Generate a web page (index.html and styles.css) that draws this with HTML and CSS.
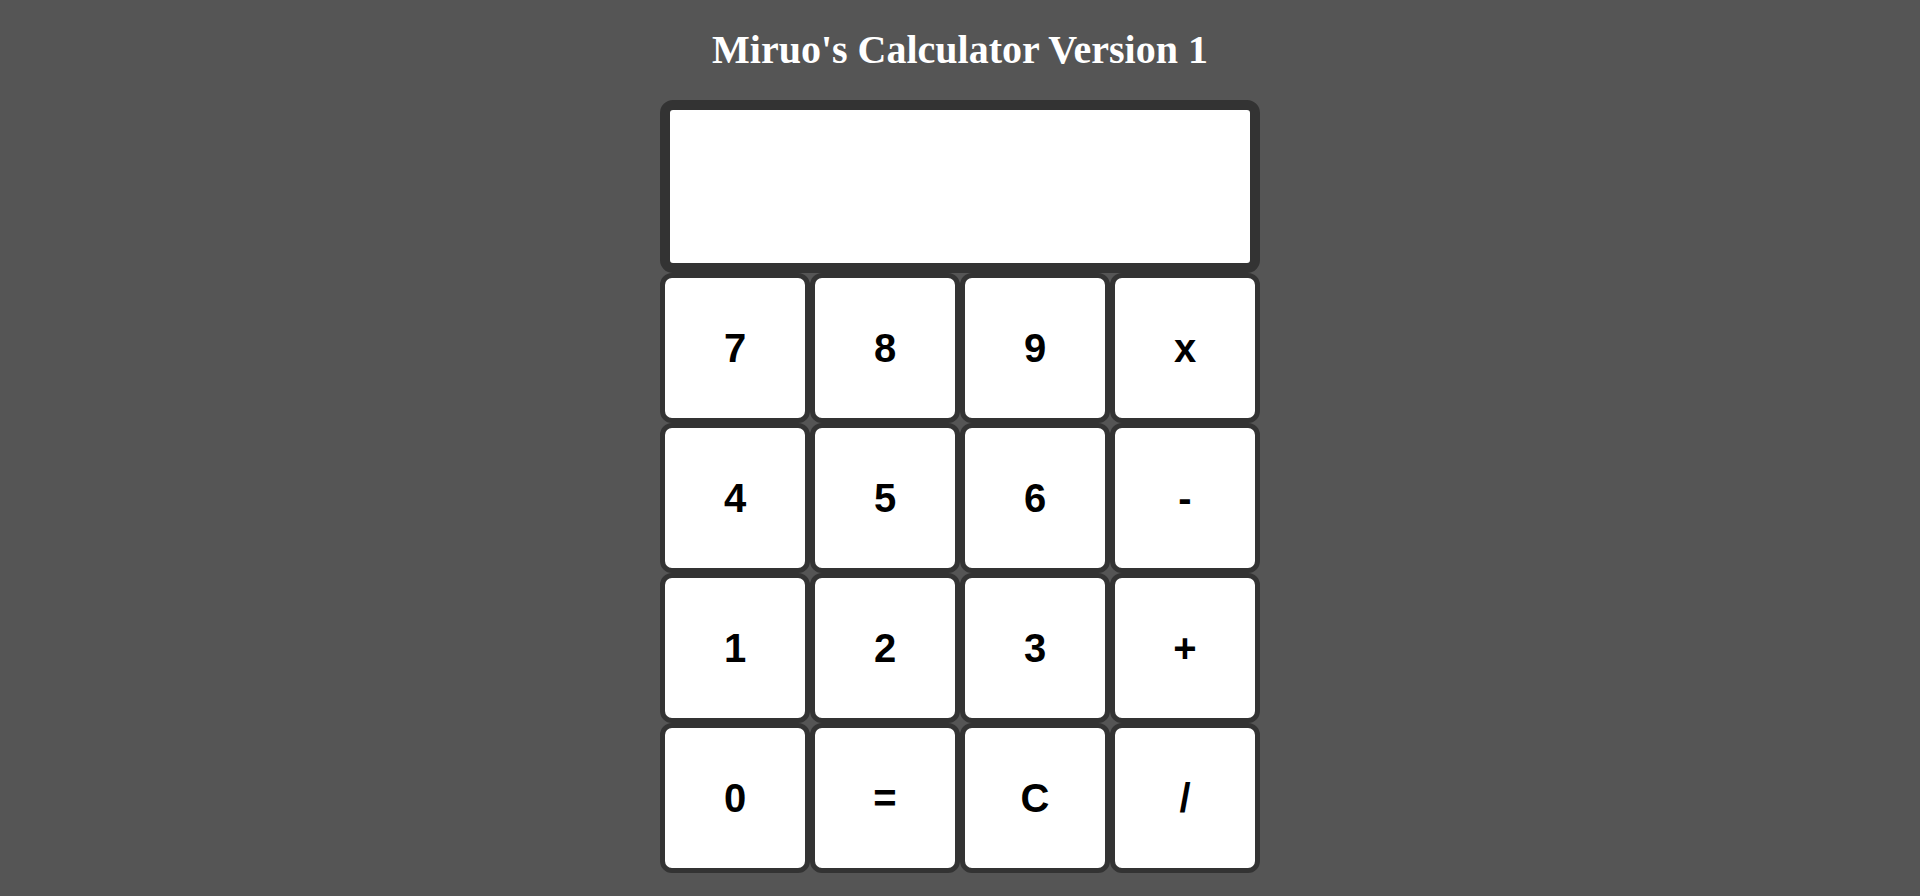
FILE: index.html
```html
<!DOCTYPE html>
<html lang="en">
<head>
<meta charset="utf-8">
<title>Miruo's Calculator Version 1</title>
<link rel="stylesheet" href="styles.css">
</head>
<body>
<h1 class="title">Miruo's Calculator Version 1</h1>
<div class="calculator">
  <div class="display"></div>
  <div class="keys">
    <button class="key">7</button>
    <button class="key">8</button>
    <button class="key">9</button>
    <button class="key">x</button>
    <button class="key">4</button>
    <button class="key">5</button>
    <button class="key">6</button>
    <button class="key">-</button>
    <button class="key">1</button>
    <button class="key">2</button>
    <button class="key">3</button>
    <button class="key">+</button>
    <button class="key">0</button>
    <button class="key">=</button>
    <button class="key">C</button>
    <button class="key">/</button>
  </div>
</div>
</body>
</html>
```
FILE: styles.css
```css
html, body {
  margin: 0;
  padding: 0;
  background: #555555;
}

body {
  padding-top: 1px;
}

.title {
  margin: 26px 0 27px;
  font-family: "Liberation Serif", "Times New Roman", serif;
  font-size: 40px;
  line-height: 46px;
  font-weight: bold;
  color: #ffffff;
  text-align: center;
}

.calculator {
  width: 600px;
  margin: 0 auto;
  display: flex;
  flex-direction: column;
}

.display {
  box-sizing: border-box;
  height: 173px;
  background: #ffffff;
  border: 10px solid #333333;
  border-radius: 13px;
}

.keys {
  display: grid;
  grid-template-columns: repeat(4, 150px);
  grid-auto-rows: 150px;
}

.key {
  box-sizing: border-box;
  margin: 0;
  padding: 0;
  background: #ffffff;
  border: 5px solid #333333;
  border-radius: 12px;
  font-family: "Liberation Sans", Arial, sans-serif;
  font-weight: bold;
  font-size: 40px;
  color: #000000;
}
```
